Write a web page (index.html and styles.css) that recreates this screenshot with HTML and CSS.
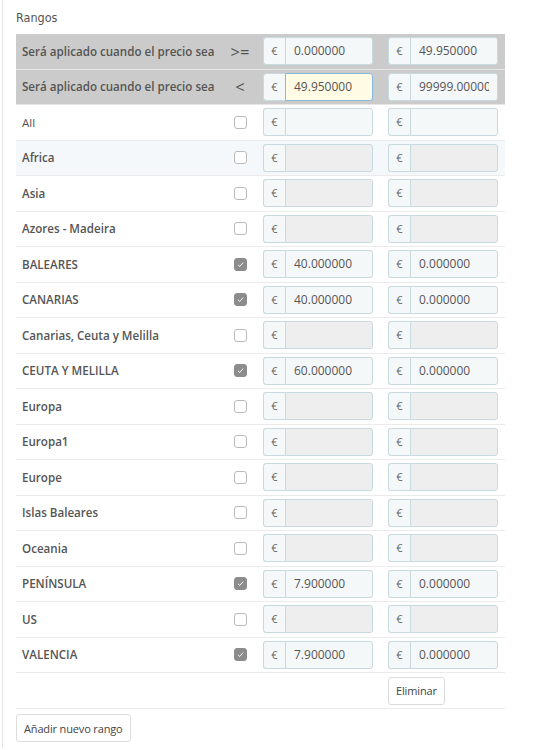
FILE: index.html
```html
<!DOCTYPE html>
<html lang="es">
<head>
<meta charset="utf-8">
<link rel="stylesheet" href="styles.css">
</head>
<body>
<div class="panel">
  <div class="title">Rangos</div>
  <div class="grid">
    <div class="row head">
      <div class="lbl">Será aplicado cuando el precio sea</div>
      <div class="op">&gt;=</div>
      <div class="cell"><div class="ig"><span class="add">€</span><span class="inp"><span class="v">0.000000</span></span></div></div>
      <div class="cell"><div class="ig"><span class="add">€</span><span class="inp"><span class="v">49.950000</span></span></div></div>
    </div>
    <div class="row head">
      <div class="lbl">Será aplicado cuando el precio sea</div>
      <div class="op">&lt;</div>
      <div class="cell"><div class="ig"><span class="add">€</span><span class="inp focus"><span class="v">49.950000</span></span></div></div>
      <div class="cell"><div class="ig"><span class="add">€</span><span class="inp"><span class="v">99999.000000</span></span></div></div>
    </div>
    <div class="row">
      <div class="lbl normal">All</div>
      <div class="op"><span class="cb"></span></div>
      <div class="cell"><div class="ig"><span class="add">€</span><span class="inp"></span></div></div>
      <div class="cell"><div class="ig"><span class="add">€</span><span class="inp"></span></div></div>
    </div>
    <div class="row alt">
      <div class="lbl">Africa</div>
      <div class="op"><span class="cb"></span></div>
      <div class="cell"><div class="ig"><span class="add">€</span><span class="inp dis"></span></div></div>
      <div class="cell"><div class="ig"><span class="add">€</span><span class="inp dis"></span></div></div>
    </div>
    <div class="row">
      <div class="lbl">Asia</div>
      <div class="op"><span class="cb"></span></div>
      <div class="cell"><div class="ig"><span class="add">€</span><span class="inp dis"></span></div></div>
      <div class="cell"><div class="ig"><span class="add">€</span><span class="inp dis"></span></div></div>
    </div>
    <div class="row">
      <div class="lbl">Azores - Madeira</div>
      <div class="op"><span class="cb"></span></div>
      <div class="cell"><div class="ig"><span class="add">€</span><span class="inp dis"></span></div></div>
      <div class="cell"><div class="ig"><span class="add">€</span><span class="inp dis"></span></div></div>
    </div>
    <div class="row">
      <div class="lbl">BALEARES</div>
      <div class="op"><span class="cb on"><svg viewBox="0 0 13 13"><path d="M3.5 6.8 L5.6 8.9 L9.6 4.2" /></svg></span></div>
      <div class="cell"><div class="ig"><span class="add">€</span><span class="inp"><span class="v">40.000000</span></span></div></div>
      <div class="cell"><div class="ig"><span class="add">€</span><span class="inp"><span class="v">0.000000</span></span></div></div>
    </div>
    <div class="row">
      <div class="lbl">CANARIAS</div>
      <div class="op"><span class="cb on"><svg viewBox="0 0 13 13"><path d="M3.5 6.8 L5.6 8.9 L9.6 4.2" /></svg></span></div>
      <div class="cell"><div class="ig"><span class="add">€</span><span class="inp"><span class="v">40.000000</span></span></div></div>
      <div class="cell"><div class="ig"><span class="add">€</span><span class="inp"><span class="v">0.000000</span></span></div></div>
    </div>
    <div class="row">
      <div class="lbl">Canarias, Ceuta y Melilla</div>
      <div class="op"><span class="cb"></span></div>
      <div class="cell"><div class="ig"><span class="add">€</span><span class="inp dis"></span></div></div>
      <div class="cell"><div class="ig"><span class="add">€</span><span class="inp dis"></span></div></div>
    </div>
    <div class="row">
      <div class="lbl">CEUTA Y MELILLA</div>
      <div class="op"><span class="cb on"><svg viewBox="0 0 13 13"><path d="M3.5 6.8 L5.6 8.9 L9.6 4.2" /></svg></span></div>
      <div class="cell"><div class="ig"><span class="add">€</span><span class="inp"><span class="v">60.000000</span></span></div></div>
      <div class="cell"><div class="ig"><span class="add">€</span><span class="inp"><span class="v">0.000000</span></span></div></div>
    </div>
    <div class="row">
      <div class="lbl">Europa</div>
      <div class="op"><span class="cb"></span></div>
      <div class="cell"><div class="ig"><span class="add">€</span><span class="inp dis"></span></div></div>
      <div class="cell"><div class="ig"><span class="add">€</span><span class="inp dis"></span></div></div>
    </div>
    <div class="row">
      <div class="lbl">Europa1</div>
      <div class="op"><span class="cb"></span></div>
      <div class="cell"><div class="ig"><span class="add">€</span><span class="inp dis"></span></div></div>
      <div class="cell"><div class="ig"><span class="add">€</span><span class="inp dis"></span></div></div>
    </div>
    <div class="row">
      <div class="lbl">Europe</div>
      <div class="op"><span class="cb"></span></div>
      <div class="cell"><div class="ig"><span class="add">€</span><span class="inp dis"></span></div></div>
      <div class="cell"><div class="ig"><span class="add">€</span><span class="inp dis"></span></div></div>
    </div>
    <div class="row">
      <div class="lbl">Islas Baleares</div>
      <div class="op"><span class="cb"></span></div>
      <div class="cell"><div class="ig"><span class="add">€</span><span class="inp dis"></span></div></div>
      <div class="cell"><div class="ig"><span class="add">€</span><span class="inp dis"></span></div></div>
    </div>
    <div class="row">
      <div class="lbl">Oceania</div>
      <div class="op"><span class="cb"></span></div>
      <div class="cell"><div class="ig"><span class="add">€</span><span class="inp dis"></span></div></div>
      <div class="cell"><div class="ig"><span class="add">€</span><span class="inp dis"></span></div></div>
    </div>
    <div class="row">
      <div class="lbl">PENÍNSULA</div>
      <div class="op"><span class="cb on"><svg viewBox="0 0 13 13"><path d="M3.5 6.8 L5.6 8.9 L9.6 4.2" /></svg></span></div>
      <div class="cell"><div class="ig"><span class="add">€</span><span class="inp"><span class="v">7.900000</span></span></div></div>
      <div class="cell"><div class="ig"><span class="add">€</span><span class="inp"><span class="v">0.000000</span></span></div></div>
    </div>
    <div class="row">
      <div class="lbl">US</div>
      <div class="op"><span class="cb"></span></div>
      <div class="cell"><div class="ig"><span class="add">€</span><span class="inp dis"></span></div></div>
      <div class="cell"><div class="ig"><span class="add">€</span><span class="inp dis"></span></div></div>
    </div>
    <div class="row">
      <div class="lbl">VALENCIA</div>
      <div class="op"><span class="cb on"><svg viewBox="0 0 13 13"><path d="M3.5 6.8 L5.6 8.9 L9.6 4.2" /></svg></span></div>
      <div class="cell"><div class="ig"><span class="add">€</span><span class="inp"><span class="v">7.900000</span></span></div></div>
      <div class="cell"><div class="ig"><span class="add">€</span><span class="inp"><span class="v">0.000000</span></span></div></div>
    </div>
    <div class="row last">
      <div></div>
      <div></div>
      <div></div>
      <div class="cell"><button class="btn">Eliminar</button></div>
    </div>
  </div>
  <div class="foot"><button class="btn">Añadir nuevo rango</button></div>
</div>
</body>
</html>
```

FILE: styles.css
```css
html, body {
  margin: 0;
  padding: 0;
  background: #fff;
}
body {
  font-family: "Open Sans", "Noto Sans", sans-serif;
  font-size: 12px;
  color: #555;
}
.panel {
  margin-left: 2px;
  border-left: 1px solid #e4e4e4;
  padding-left: 13px;
  padding-bottom: 6px;
  width: 490px;
}
.title {
  height: 34px;
  line-height: 36px;
  font-family: "Liberation Sans Narrow", "DejaVu Sans Condensed", sans-serif;
  font-size: 12.5px;
  color: #555;
}
.grid {
  width: 489px;
}
.row {
  display: grid;
  grid-template-columns: 206px 41px 125px 117px;
  align-items: center;
  height: 35.5px;
  box-sizing: border-box;
  border-bottom: 1px solid #ebebeb;
}
.row.head {
  background: #cbcbcb;
  border-bottom: 1px solid #e6e6e6;
}
.row.alt {
  background: #f5f8fa;
}
.row.last {
  height: 36px;
}
.lbl {
  padding-left: 6px;
  font-weight: 600;
  font-size: 11.6px;
  color: #555;
  white-space: nowrap;
}
.lbl.normal {
  font-weight: 400;
}
.op {
  display: flex;
  justify-content: center;
  align-items: center;
  font-size: 16.5px;
  color: #555;
  padding-right: 5px;
}
.cb {
  display: block;
  width: 11px;
  height: 11px;
  border: 1px solid #bbbbbb;
  border-radius: 3px;
  background: #fff;
}
.cb.on {
  background: #8c8c8c;
  border-color: #8c8c8c;
}
.cb svg {
  display: block;
  width: 11px;
  height: 11px;
}
.cb path {
  fill: none;
  stroke: #fff;
  stroke-width: 1.1;
}
.ig {
  display: flex;
  width: 110px;
  height: 28px;
  box-sizing: border-box;
}
.add {
  width: 22px;
  box-sizing: border-box;
  border: 1px solid #c9dade;
  border-right: none;
  border-radius: 3px 0 0 3px;
  background: #f5f8f9;
  text-align: center;
  line-height: 26px;
  font-size: 11px;
  color: #666;
}
.inp {
  flex: 1;
  min-width: 0;
  display: flex;
  box-sizing: border-box;
  border: 1px solid #c9dade;
  border-radius: 0 3px 3px 0;
  background: #f5f8f9;
  line-height: 26px;
  padding-left: 8px;
  padding-right: 8px;
  font-size: 12px;
  color: #555;
}
.v {
  flex: 1;
  min-width: 0;
  overflow: hidden;
  white-space: nowrap;
}
.inp.dis {
  background: #eeeeee;
}
.inp.focus {
  background: #fffbe4;
  border-color: #86b9de;
}
.btn {
  display: block;
  font-family: "Open Sans", "Noto Sans", sans-serif;
  font-size: 11px;
  letter-spacing: -0.15px;
  color: #444;
  background: #fff;
  border: 1px solid #dcdcdc;
  border-radius: 3px;
  height: 28px;
  padding: 0 7px;
  cursor: pointer;
}
.foot {
  padding-top: 5px;
}
```
